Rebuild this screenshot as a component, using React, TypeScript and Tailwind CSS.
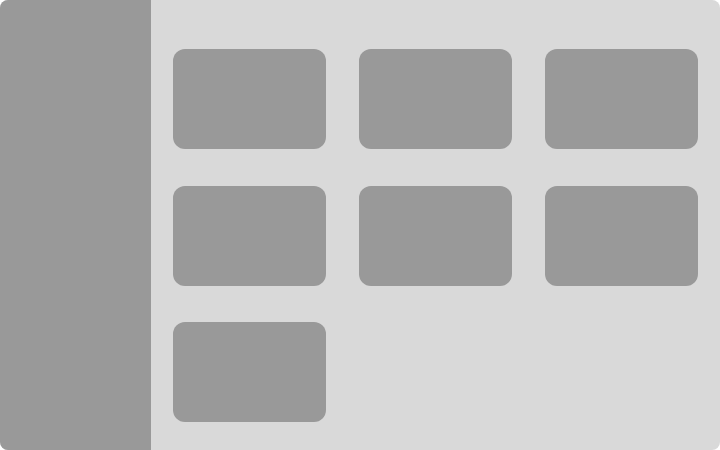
// Esqueleto de carga: barra lateral + cuadrícula de tarjetas.

const TARJETAS = [1, 2, 3, 4, 5, 6, 7]

export default function App() {
  return (
    <div className="w-[720px] h-[450px] bg-white">
      <div className="flex h-full w-full overflow-hidden rounded-lg bg-[#d9d9d9]">
        {/* Barra lateral */}
        <aside className="w-[151px] shrink-0 bg-[#999999]" />

        {/* Contenido */}
        <main className="flex-1 pl-[22px] pr-[22px] pt-[49px]">
          <div className="grid grid-cols-[153px_153px_153px] gap-x-[33px] gap-y-[36.5px]">
            {TARJETAS.map(t => (
              <div key={t} className="h-[100px] rounded-xl bg-[#999999]" />
            ))}
          </div>
        </main>
      </div>
    </div>
  )
}
